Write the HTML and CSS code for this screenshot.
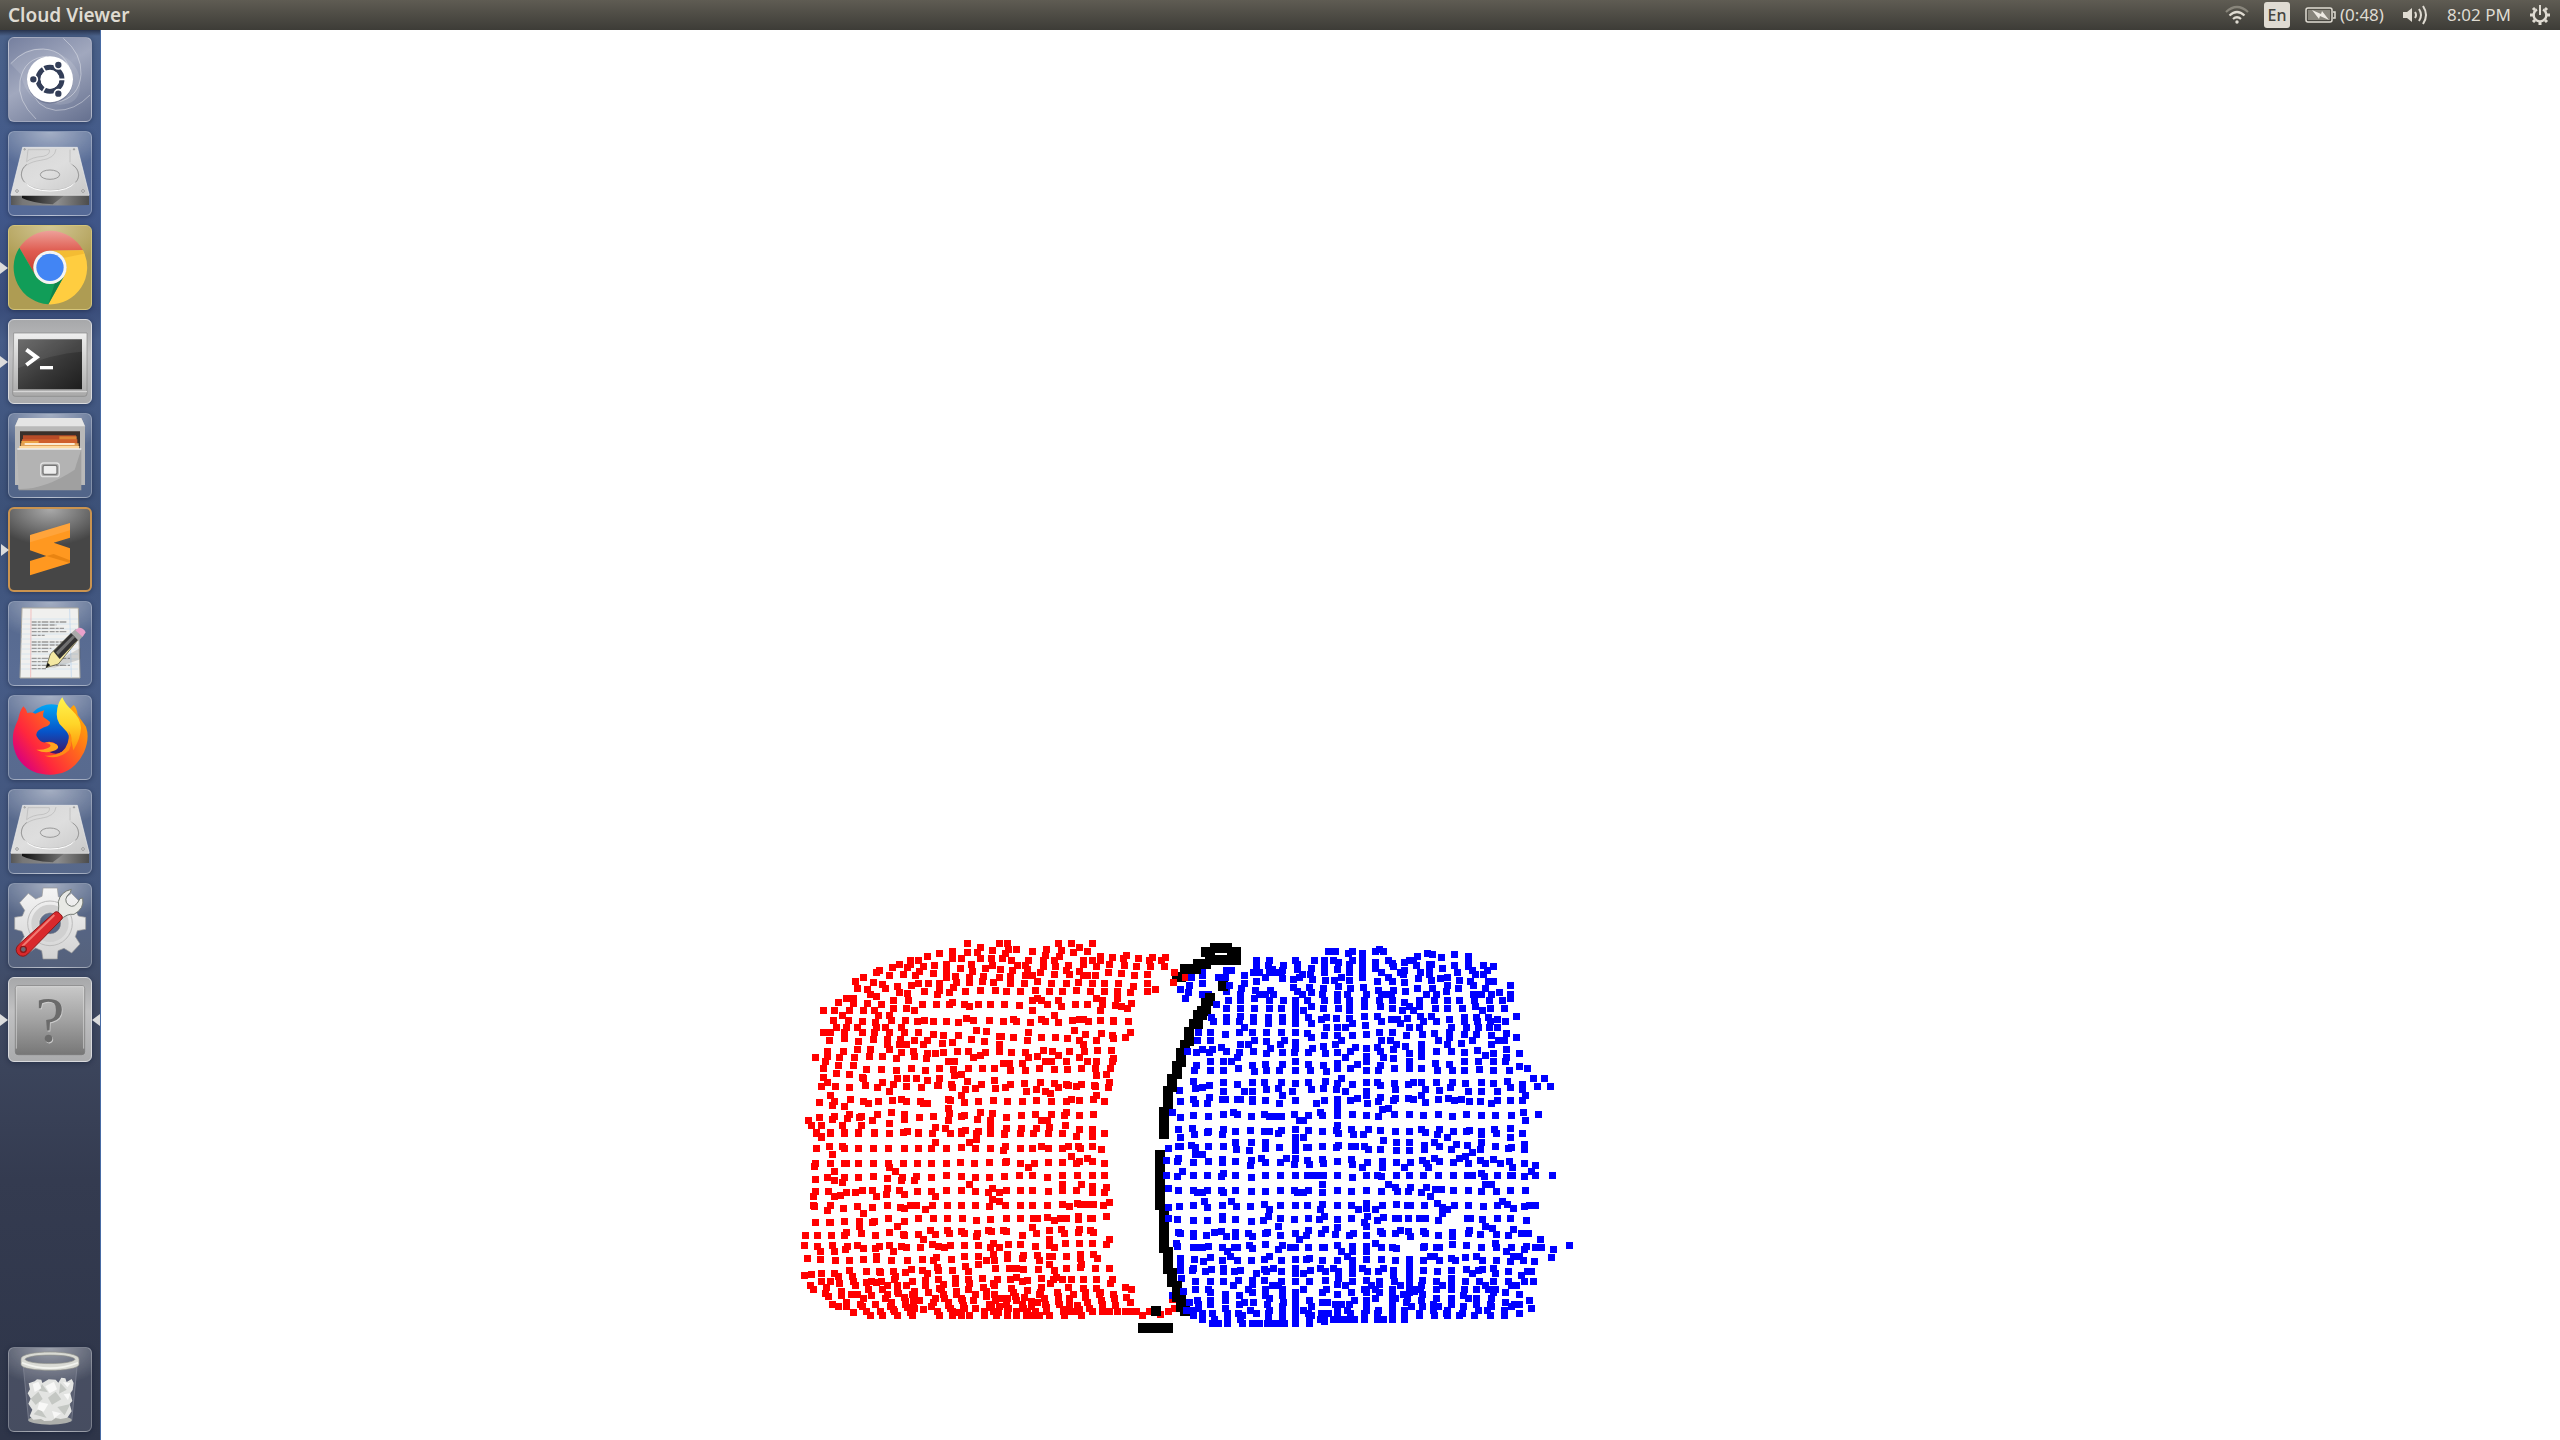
FILE: index.html
```html
<!DOCTYPE html>
<html lang="en">
<head>
<meta charset="utf-8">
<title>Cloud Viewer</title>
<link rel="stylesheet" href="styles.css">
</head>
<body>
<header class="panel">
  <h1 class="panel-title">Cloud Viewer</h1>
  <div class="indicators">
    <button class="indicator wifi" aria-label="Network"><svg width="24" height="20" viewBox="0 0 24 20" fill="none" stroke="#dfdbd2" stroke-width="2.2"><path d="M1 7Q12-3 23 7" stroke="#88857b"/><path d="M4.500 10.500Q12 3.500 19.500 10.500"/><path d="M8 14Q12 10.500 16 14"/><circle cx="12" cy="17" r="1.700" fill="#dfdbd2" stroke="none"/></svg></button>
    <button class="indicator lang">En</button>
    <button class="indicator battery"><svg width="31" height="18" viewBox="0 0 31 18"><rect x="1" y="2" width="26" height="14" rx="2" fill="none" stroke="#dfdbd2" stroke-width="1.500"/><rect x="3" y="4" width="22" height="10" fill="#88857b"/><path d="M28 6h2v6h-2" fill="none" stroke="#dfdbd2" stroke-width="1.500"/><path d="M7 4l9 4 1-3 7 9-9-4-1 3z" fill="#eeeae2"/></svg><span>(0:48)</span></button>
    <button class="indicator volume" aria-label="Sound"><svg width="26" height="22" viewBox="0 0 26 22"><path d="M1 8h4l5-4v14l-5-4H1z" fill="#dfdbd2"/><path d="M13 8q2 3 0 6M17 5q4 6 0 12M21 2q6 9 0 18" fill="none" stroke="#dfdbd2" stroke-width="2"/></svg></button>
    <button class="indicator clock">8:02 PM</button>
    <button class="indicator session" aria-label="Session"><svg width="20" height="20" viewBox="-10 -10 20 20" fill="none" stroke="#dfdbd2"><path d="M-3-5.500A6.300 6.300 0 1 0 3-5.500" stroke-width="2.400"/><path d="M0-10V0" stroke-width="2"/><path d="M0 7V10M7 0H10M-7 0H-10M5 5L7 7M-5 5L-7 7M5-5L7-7M-5-5L-7-7" stroke-width="3"/></svg></button>
  </div>
</header>
<div class="desktop">
<nav class="launcher" aria-label="Launcher">
  <button class="tile dash" aria-label="Dash"><svg viewBox="0 0 252 255">
    <path d="M8 80Q64 12 143 45T216 150 110 196Q54 186 38 112Z" fill="#fff" opacity=".12"/>
    <g fill="none" stroke="#fff" stroke-opacity=".38" stroke-width="3"><path d="M8 80Q50 34 106 36Q178 40 190 118"/><path d="M166 4Q222 50 219 112Q214 182 146 196"/><path d="M246 174Q200 222 143 220Q80 212 70 150"/><path d="M84 246Q26 190 36 132Q48 62 118 58"/></g>
    <circle cx="126" cy="131" r="69" fill="#20294a" opacity=".25"/><circle cx="126" cy="127" r="69" fill="#fff"/>
    <circle cx="126" cy="127" r="36" fill="none" stroke="#333e58" stroke-width="15"/>
    <path d="M126 127h50M126 127l-25-43M126 127l-25 43" stroke="#fff" stroke-width="5"/><circle cx="126" cy="127" r="28" fill="#fff"/>
    <g fill="#333e58" stroke="#fff" stroke-width="5"><circle cx="76" cy="127" r="12"/><circle cx="151" cy="84" r="12"/><circle cx="151" cy="170" r="12"/></g></svg></button>
  <button class="tile" aria-label="Volume"><svg viewBox="0 0 252 255">
    <defs>
      <linearGradient id="disk" x2="1" y2="1"><stop stop-color="#d5d5d5"/><stop offset=".5" stop-color="#dedede"/><stop offset="1" stop-color="#c8c8c8"/></linearGradient>
      <linearGradient id="side"><stop stop-color="#555"/><stop offset=".15" stop-color="#777"/><stop offset=".6" stop-color="#8d8d8d"/><stop offset="1" stop-color="#4c4c4c"/></linearGradient>
      <linearGradient id="hollow"><stop stop-color="#111"/><stop offset="1" stop-color="#777"/></linearGradient>
    </defs>
    <g id="drive"><path d="M9 192H243V222Q126 225 9 222Z" fill="url(#side)"/><path d="M42 193H170L134 220Q70 216 42 201Z" fill="url(#hollow)"/><path d="M44 49H208L243 190V193H9V190Z" fill="url(#disk)" stroke="#eee" stroke-width="2"/>
    <g fill="none" stroke="#b6b6b6" stroke-width="2"><path d="M188 98Q212 110 212 132C212 158 174 178 126 178S40 158 40 132C40 106 66 92 98 88Q142 82 144 54M56 92L60 56H124Q128 70 106 76Q72 78 56 92M186 56V94"/></g><path d="M56 100Q40 112 40 132Q42 150 58 160M194 160Q212 150 212 132Q210 112 194 102" fill="none" stroke="#9b9b9b" stroke-width="3"/><ellipse cx="126" cy="131" rx="29" ry="14" fill="none" stroke="#999" stroke-width="3"/>
    <path d="M50 154Q72 180 126 180T202 154" fill="none" stroke="#fff" stroke-width="3"/>
    <g fill="#eee" stroke="#777" stroke-width="2"><circle cx="27" cy="180" r="4"/><circle cx="225" cy="180" r="4"/><circle cx="50" cy="55" r="2"/><circle cx="198" cy="55" r="2"/></g></g></svg></button>
  <button class="tile chrome running" aria-label="Google Chrome"><svg viewBox="0 0 252 255">
    <defs><linearGradient id="cred" x2="0" y2="1"><stop stop-color="#eda099"/><stop offset=".45" stop-color="#df5c50"/><stop offset="1" stop-color="#c43a2d"/></linearGradient></defs>
    <path d="M34 68A111 111 0 0 1 225 76L126 77A50 50 0 0 0 83 152Z" fill="url(#cred)"/><path d="M225 76A111 111 0 0 1 121 238L169 152A50 50 0 0 0 126 77Z" fill="#ffcd40"/><path d="M121 238A111 111 0 0 1 34 68L83 152A50 50 0 0 0 169 152Z" fill="#119d58"/><path d="M131 77H225L228 86 170 98Z" fill="#edb02b" opacity=".6"/><path d="M121 238L166 156 140 176Z" fill="#0b6b3b" opacity=".5"/><circle cx="126" cy="127" r="50" fill="#f4f4f4"/><circle cx="126" cy="127" r="41" fill="#4285f4"/></svg></button>
  <button class="tile light running" aria-label="Terminal"><svg viewBox="0 0 252 255">
    <defs><linearGradient id="term" x2="1" y2="1"><stop stop-color="#626262"/><stop offset=".55" stop-color="#383838"/><stop offset="1" stop-color="#1d1d1d"/></linearGradient><linearGradient id="metal" x2="0" y2="1"><stop stop-color="#efefef"/><stop offset="1" stop-color="#a9a9a9"/></linearGradient></defs>
    <path d="M17 42H237V224Q237 232 229 232H22Q14 232 14 224Z" fill="url(#metal)" stroke="#858585" stroke-width="2"/><path d="M16 218H237" stroke="#ddd" stroke-width="3"/><path d="M30 61H222V211H30Z" fill="url(#term)"/><path d="M30 61H222V98Q130 104 30 148Z" fill="#fff" opacity=".07"/><path d="M55 92L86 115 55 138" fill="none" stroke="#fff" stroke-width="12"/><path d="M96 146H135" stroke="#fff" stroke-width="10"/></svg></button>
  <button class="tile" aria-label="Files"><svg viewBox="0 0 252 255">
    <path d="M32 15H220L231 40V216H21V40Z" fill="#b9b9b9"/><path d="M32 15H220L231 40H21Z" fill="#e5e5e5"/><path d="M36 55H216V112H36Z" fill="#3b302a"/><path d="M45 67H204V110H45Z" fill="#b84c28"/><path d="M154 70H206V110H154Z" fill="#dc8738"/><path d="M42 79H208V110H42Z" fill="#cf5f2c"/><path d="M40 84H92V110H40Z" fill="#eca347"/><path d="M38 91H212V112H38Z" fill="#e1a257"/><path d="M50 90H200V96H50Z" fill="#fbe9d1"/><path d="M34 99H214V108H34Z" fill="#ffd9a0"/><path d="M28 108H220V232H32Z" fill="#a0a0a0"/><path d="M28 108H220L200 170Q110 230 30 228Z" fill="#c0c0c0" opacity=".6"/><path d="M28 108H220" stroke="#eee" stroke-width="4"/><rect x="98" y="150" width="56" height="41" rx="9" fill="#aaa" stroke="#e2e2e2" stroke-width="4"/><rect x="105" y="157" width="42" height="27" rx="5" fill="#eee" stroke="#777" stroke-width="4"/></svg></button>
  <button class="tile sublime running" aria-label="Sublime Text"><svg viewBox="0 0 252 255"><path d="M66 84L186 48V92L137 107 186 124V168L66 205V162L115 147 66 130Z" fill="#ff9820"/><path d="M115 147L186 168V160L137 141Z" fill="#cf6d00" opacity=".45"/><path d="M66 84L186 48V70L66 106Z" fill="#fff" opacity=".12"/></svg></button>
  <button class="tile" aria-label="Text Editor"><svg viewBox="0 0 252 255">
    <path d="M42 21H211L216 231H36Z" fill="#f0f0ee" stroke="#aaa89f" stroke-width="3"/><g stroke="#cbdff0" stroke-width="2"><path d="M42 54H210M42 69H210M41 84H210M41 99H210M40 114H210M40 129H210M40 144H210M40 159H210M40 174H210M40 189H210M39 204H210"/></g><path d="M69 24L68 230" stroke="#f1a7a7" stroke-width="2"/><path d="M185 24L190 230" stroke="#b9d3ee" stroke-width="2"/>
    <g stroke="#999" stroke-width="4" stroke-dasharray="15 3 9 3 20 4"><path d="M71 63H176M71 72H145M71 82H168M71 92H178M71 103H110M71 123H176M71 132H165M71 142H130M71 152H120M71 172H186M71 182H140M71 193H186M71 203H114"/></g>
    <path d="M114 199L218 140V175L140 200Z" fill="#555" opacity=".2"/><path d="M127 159L189 98 209 118 151 189 114 200Z" fill="#f4e8a2" stroke="#3b3927" stroke-width="2"/><path d="M136 151L190 96 210 116 155 174Z" fill="#333"/><path d="M144 154L195 103 201 109 150 162Z" fill="#707070"/><path d="M190 96L204 83 226 104 212 119Z" fill="#aaa"/><path d="M202 88L212 80Q228 80 233 94L224 107Z" fill="#e9a1cb"/><path d="M114 200L119 185 127 193Z" fill="#111"/></svg></button>
  <button class="tile" aria-label="Firefox"><svg viewBox="0 0 252 255">
    <defs><linearGradient id="fox" x1="0" y1=".7" x2="1" y2="0"><stop stop-color="#d8007f"/><stop offset=".25" stop-color="#ff273d"/><stop offset=".6" stop-color="#ff6a1c"/><stop offset="1" stop-color="#ffbd00"/></linearGradient><linearGradient id="globe" x2="0" y2="1"><stop stop-color="#00a5f5"/><stop offset=".55" stop-color="#0753c8"/><stop offset="1" stop-color="#3e1465"/></linearGradient><linearGradient id="tail" x2="0" y2="1"><stop stop-color="#fff44f"/><stop offset=".5" stop-color="#ffd529"/><stop offset="1" stop-color="#ff9208"/></linearGradient></defs>
    <circle cx="130" cy="103" r="75" fill="url(#globe)"/><path d="M46 34Q54 40 58 54Q70 50 82 56Q95 50 109 46Q104 56 106 66L124 79Q130 86 119 93Q107 95 92 106Q80 116 88 127Q97 144 112 142Q133 137 147 149Q139 162 118 167Q142 184 162 170Q192 153 184 112L174 64Q184 40 197 30Q207 40 209 60L234 95Q246 130 228 172Q195 239 126 239Q63 239 30 190Q8 150 17 108Q22 90 30 74Q36 46 46 34Z" fill="url(#fox)"/><path d="M163 7Q170 26 192 46Q218 70 219 99Q218 130 196 166Q190 120 164 97Q140 77 148 40Q152 19 163 7Z" fill="url(#tail)"/><path d="M182 108Q200 130 183 166Q151 197 110 182Q142 183 162 170Q186 150 182 108Z" fill="#ff8a16"/><path d="M85 164Q112 178 142 166Q156 158 147 149Q132 138 112 143Q140 149 118 160Q102 166 85 164Z" fill="#ffa51f"/></svg></button>
  <button class="tile" aria-label="Second Volume"><svg viewBox="0 0 252 255"><use href="#drive"/></svg></button>
  <button class="tile" aria-label="System Settings"><svg viewBox="0 0 252 255">
    <defs><linearGradient id="gear" x2="0" y2="1"><stop stop-color="#f5f5f5"/><stop offset="1" stop-color="#d2d2d2"/></linearGradient></defs>
    <path fill-rule="evenodd" d="M105 15H148L151 41 168 48 190 31 219 60 203 83 211 99 233 103V139L208 143 202 161 216 183 191 210 168 196 150 203 148 228H105L101 203 83 195 60 211 34 184 49 161 42 145 20 139V103L43 99 50 82 35 59 61 31 83 48 102 40ZM126 89a32 32 0 1 0 1 0Z" fill="url(#gear)" stroke="#999" stroke-width="2"/><circle cx="126" cy="121" r="67" fill="none" stroke="#bbb" stroke-width="3"/><circle cx="126" cy="121" r="45" fill="none" stroke="#d0d0d0" stroke-width="22"/>
    <path d="M145 99Q155 84 151 56Q158 26 190 19L187 28Q163 50 181 66Q200 80 216 47L224 45Q230 77 198 94Q176 91 158 111Z" fill="#e8e9e5" stroke="#777c76" stroke-width="3"/><path d="M140 88Q148 81 162 99Q166 105 158 112L59 213Q46 226 30 214Q18 199 32 185Z" fill="#d9292c" stroke="#8d1717" stroke-width="3"/><path d="M139 96L43 190" stroke="#f27a72" stroke-width="6"/><circle cx="46" cy="199" r="9" fill="#6b6873" stroke="#8d1717" stroke-width="4"/></svg></button>
  <button class="tile light running focused" aria-label="Cloud Viewer"><svg viewBox="0 0 252 255">
    <defs><linearGradient id="unknown" x2="0" y2="1"><stop stop-color="#c9c9c9"/><stop offset=".5" stop-color="#a2a2a2"/><stop offset="1" stop-color="#777"/></linearGradient></defs>
    <rect x="22" y="26" width="208" height="207" rx="8" fill="url(#unknown)" stroke="#777" stroke-width="2"/><path d="M25 215V29H227V215" fill="none" stroke="#ddd" stroke-width="2"/><text x="128" y="198" text-anchor="middle" class="question question-light">?</text><text x="126" y="196" text-anchor="middle" class="question">?</text></svg></button>
  <button class="tile trash" aria-label="Trash"><svg viewBox="0 0 252 255">
    <path d="M45 50L62 222Q126 238 191 222L208 50Z" fill="#b8bac2" fill-opacity=".17" stroke="#858a99" stroke-width="2"/><ellipse cx="126" cy="219" rx="65" ry="14" fill="#aeb0ac"/>
    <path d="M62 109L80 103 87 97 100 98 103 108 122 97 143 98 151 107 160 92 172 94 176 105 191 96 197 108 194 129 187 139 193 162 185 171 191 193 178 212 158 216 143 213 131 221 109 222 99 216 76 218 65 207 73 188 61 170 68 155 59 139 66 127Z" fill="#e3e4e2"/>
    <g fill="#c4c7c3"><path d="M68 155L91 134 104 156 83 174ZM102 111L120 136 93 131ZM120 152L143 134 160 157 132 173ZM157 108L176 128 153 140ZM148 180L187 171 170 205ZM77 202L95 183 116 213Z"/></g><g fill="#f8f8f7"><path d="M74 111L91 104 100 124 80 135ZM112 118L138 104 147 127 125 139ZM167 142L187 139 180 160ZM94 165L121 171 107 194 88 187ZM132 192L159 199 139 214ZM165 105L187 109 178 121Z"/></g>
    <path fill-rule="evenodd" d="M39 36C39 8 213 8 213 36V52C213 76 39 76 39 52ZM51 37C58 54 194 54 201 37C194 20 58 20 51 37Z" fill="#d9dad4" stroke="#91928c" stroke-width="2"/><path d="M42 47Q126 80 210 47" stroke="#f3f4ef" stroke-width="5" fill="none"/></svg></button>
</nav>
<main class="viewer">
  <svg id="cloud" class="cloud" viewBox="101 30 2459 1410" role="img" aria-label="Point cloud"></svg>
</main>
</div>
<script src="cloud.js"></script>
</body>
</html>
```

FILE: styles.css
```css
* { box-sizing: border-box; }
body { margin: 0; min-height: 100vh; display: flex; flex-direction: column; background: #fff; font-family: "Noto Sans", sans-serif; overflow: hidden; }
button { border: 0; padding: 0; background: none; color: inherit; font: inherit; }
svg { display: block; }
.panel { height: 30px; flex: none; display: flex; align-items: center; justify-content: space-between; padding: 0 10px 0 8px; background: linear-gradient(#5f5c53, #3d3c37); color: #dfdbd2; }
.panel-title { margin: 0; font-size: 19px; line-height: 30px; font-weight: 600; }
.indicators { display: flex; align-items: center; font-size: 17px; }
.indicator { display: flex; align-items: center; line-height: 30px; white-space: nowrap; }
.wifi { margin-right: 15px; }
.lang { width: 26px; height: 26px; margin-right: 15px; justify-content: center; border-radius: 3px; background: #dfdbd2; color: #45443e; font-size: 16px; font-weight: 500; }
.battery { gap: 4px; width: 82px; margin-right: 15px; }
.volume { margin-right: 19px; }
.clock { width: 66px; margin-right: 17px; }
.desktop { flex: 1; display: flex; }
.launcher { width: 101px; flex: none; display: flex; flex-direction: column; gap: 9px; padding: 7px 8px 8px; border-right: 1px solid #476ba4; background: linear-gradient(#28334c, #4a6189 6px, #40578a 180px, #3a4d7a 280px, #465c88 310px, #3c5178 480px, #465b86 640px, #42557b 860px, #3f4961 980px, #343b50 1150px, #2e3549 1410px); }
.tile { position: relative; width: 84px; height: 85px; flex: none; border: 1px solid rgba(255,255,255,.28); border-radius: 6px; background: radial-gradient(ellipse 75% 45% at 50% 0, rgba(255,255,255,.5), rgba(255,255,255,.08) 100%), rgba(150,160,190,.08); box-shadow: 0 1px 5px rgba(10,20,45,.45); }
.tile svg { width: 84px; height: 85px; margin: -1px; }
.dash { background: linear-gradient(150deg, #76809f, #a1a8be 45%, #65708f); }
.chrome { background: radial-gradient(ellipse 75% 45% at 50% 0, #d3c794, #ae9c53); border-color: #d4c479; }
.light { background: linear-gradient(#a7a8aa, #c1c1c2 40%, #aaabad); border: 1px solid #d9dadd; }
.sublime { background: radial-gradient(ellipse 75% 45% at 50% 0, #aaa, #464646); border: 2px solid #ca934f; }
.sublime svg { margin: -2px; }
.trash { margin-top: auto; }
.running::before, .focused::after { content: ""; position: absolute; top: 50%; margin-top: -6px; border: 6px solid transparent; }
.running::before { left: -9px; border-left: 8px solid #dcdcdc; border-right: 0; }
.focused::after { right: -9px; border-right: 8px solid #dcdcdc; border-left: 0; }
.question { font: 196px "Liberation Serif", serif; fill: #6b6b6b; }
.question-light { fill: #ccc; }
.viewer { flex: 1; min-width: 0; background: #fff; }
.cloud { width: 100%; height: 100%; shape-rendering: crispEdges; }
```

FILE: cloud.js
```js
// Each scan line is "y:x x x", in thirds of a pixel from the patch origin.
const patches = [
{ color: "#f00", x: 780, y: 920, rows: `70:562 658 682|82:601|91:637|94:517|97:562 592|100:478 676|109:442|115:517 544 601 634 667|121:391 415|133:358 391 499 574|136:463 637|139:430|142:337 382|145:541 616|148:661|151:298 499|154:418 577|157:289|160:460|163:370|166:328 406|169:526 610|172:250 499 568 658|184:226 607|187:280 529 568 640|190:415 445 478|193:307|196:394|199:352|202:520|205:232 316|208:262|211:601 646 478|214:433 556 679|217:358 508|220:382|223:271 472|229:289|235:199 220|241:340 385|247:175 517|250:220 262|253:304 427 469 508 553 595 631 673|259:568|265:340 379|271:130 163 208 250 283 403|286:187 295 328|295:559|301:160 205 334 376 433 580 628|304:247 412 460 499 670|307:286 535|322:169 199 232 289 316 364|331:589|334:619|337:130 151 193 247 283 328 373 415|343:460|346:490 535|349:658 661|355:193|358:280 322 361 574|361:148 403 442|364:235 613|367:517|370:487|373:322 358 379 430 658|388:232 271 328|394:142 190 400 532 565 658|397:364 490 616|400:442 466|406:601|409:268 307 403 142|412:106 178 223 580|415:349 439|424:136 505 523|430:670|436:175 220|445:130 394 478 565 607 643|448:259 304 520|451:349 436|460:169|463:208 544|466:523|472:130 247|475:352 379 409 478 250|481:442 643|484:562|487:142 307|493:340 514 604|496:256 472 475|499:124 166 379|502:208 292 424 517 676|505:586 646|508:556|514:328|526:151 544|538:211 364 505|541:337 640 511|544:163 250 295 379 421 595 682|547:118 553|550:265 430 442|556:157|559:193|565:505|577:334 601|580:508 637|583:208 292 373|586:553|589:163 244 460 544|592:118 238 418 679|595:202|598:157 592 373|601:85 277 505 631|610:328|616:94 124 187 244 631|622:466|625:496 679|631:556|634:382 544 595|637:109 151 193 235 283 370 415 631|640:328 457 511|643:673 589|649:124` },
{ color: "#f00", x: 1000, y: 920, rows: `70:22 175 214 277|82:238|88:25 49 139|91:184|94:97 262|97:220|106:379 136|109:301 178|112:337 457 496|115:370 415|121:34 85 130 163 250 277 301 448 484|133:250 328|136:52 76 373 205|139:130 166 289 409 451 493|148:82|151:37 199|154:238|157:121 325 523|160:364|163:163 208 442|166:76 97 250 262 286 403|169:31|184:112|187:235 520|190:31 73 154 199 277 313 355 442|199:400|208:466|211:106 229|214:19 61 148 187 271 313 352 442|217:391|235:112 289 352|241:97 124 175 307|250:394|253:13 142 226 262 307|256:58 346|259:184 364|265:382|271:97 301|286:163|298:40 124 238 250|301:217 301 340|304:10 49 136 265 385 340|307:91 175|331:223|337:85 391|340:304|343:256|346:337|349:4|352:40 124 166 376|355:202 340|361:82 238 289|373:250|391:130 292 334|394:157 208 253|397:34 76|406:175|409:112|412:85 238|415:340|424:136 154 199 262 289 337|430:10 28 67|445:118 244 286 331|448:163 202|451:31 76|463:319|466:289|487:121 328|490:73 163|493:31 199 244|496:205 283|499:229 286|502:16 175 325|508:109|514:79 136|520:151|526:289|538:214 280|541:109 238|544:22 67 154 199 313|577:199|583:106 154 280|586:64 193 238|592:19|601:124 142|616:196|622:148|625:19 64 109|628:238 277|640:13 61 100 145 187 313|646:277|649:229` },
{ color: "#f00", x: 780, y: 1130, rows: `10:109 151 193 235 283 328 415 457 511 544 589 631 673 721 760 805 847 937 973|19:889 937|22:124|28:589|37:466 568|49:148 187 676 784 865 895 937|52:544|55:109 193 235 280 325 373 415 454 499 586 631 721 757 805 847 901|58:964|61:670|73:157|79:874|85:922|94:679 898 937|97:541 628 847 805 676|100:106 151 193 199 235 280 325 370 412 454 499 583 721 763 889 973|109:103|112:328 745|124:163 346|136:499 718 757 847 892 937 973|139:280 409 544 673|142:142 193 235 367 454 586 628 802|145:322|148:106|151:163 364 403|157:187|163:568 847 904|169:937|172:979|175:322 637|181:247 277 358 499 544 721 757 679 889 847|184:106 145 412 454 586 805|187:199 226 625 658 973 937|193:319 373|196:181|199:100 163 289 466|208:637|214:658|217:988|220:892|223:847 901 919 940|226:100 151 322 391 409 457 502 544 586 676 721 757 802 970|229:103 232 868 628|232:277 361|235:190 373|238:436|241:142|250:250|259:979 895|262:802|265:325 415 460 502 547 679 721 760 772 841 859 895 931 937|268:631 895|271:589 823|274:193 238 283 373|277:106 148 151 277|289:238 352|292:757|298:844 898|301:451 502 625 670 808 931|304:544 634 679|307:199 328 895 940|310:244 553 508 769 592 853|313:370 415 466|316:76 112 154 193 286 373 727|319:589|328:430 808 988|340:640 856 898 937|343:685 721 457 979|346:73 157 232 328 511 553 595 808|349:112 202 298 364 475 766|352:379 421 493 631 658 823|355:250 286|358:196|364:121 163 340|373:640 682 901 940|376:730 772|379:289 553 595 808 859 817|382:469|385:82 682 901 952 727|388:121 250 427 514 289|391:166 208 334 382 460 619 643 778|403:595 808 904|409:556|412:472 901|415:646 688 709 859 946 988|418:394 730 775|421:208 427 475 517 823|424:259 298 340 565|427:376 301|430:124 163 442|433:94|436:73|439:175 217 346|442:709 829|445:607 784 526|448:343 475 565 652 691 820 847 874 910 949 997|451:436 742|454:124 151 220 274 304 397 727|457:259 289|460:178 526 640 811 991 568|463:490|466:91 226 322 352 379 436 643|472:139 610 784 865 1036|475:478 694 949 910|478:100 265 307 484 565 1054|481:742|484:184 403 352 529 619|487:445 700 916 961 781 832|490:136 355|493:214 232 322 397 490 529 586 643 778 880 958 1000|496:184 274|499:145 706 619 835|502:373 403 733 916 1039|505:250 316 466 493 544 664 682 793 868 1003|511:580 418 547 646 709 964|514:376 400 754 835|517:199 334 460 505 772 922 1051|523:157 241 286 376 628 679 727 796 838 868 967|526:550 892 1006 505|529:175 199 247 331 454 658 754|532:382 634 799|535:586 403 511 553 685 730 928|538:430 340 850 898|544:259 301 343 472 517 613 640 682 709 742 766 799 850 871 889 937 967 988 1012 1036 1057 1069 1108|547:220 391 535 655|553:1141|556:271 307 352 397 478 517 544 568 613 649 682 709 739 760 778 808 853 904 1087|544:1165|535:1183|508:1177` },
{ color: "#00f", x: 1130, y: 920, rows: `88:748|94:595 616 667 736 760|100:655 697 892|103:907 973|109:862 1015|112:934|121:379 418 496 553 583 610 667 697 775 838 850 1015|127:625 736 823|130:787|133:379 502 583 658 898 904|136:460 415 859 973 1060 697|139:1090 790 1015 379|145:544 583 697 736 658 937|148:622 427 502 898|151:217 289 304 457 823 1027 1072|157:370 388 418 436 454 583 697 754 811 871 982 658|163:517 541 1036 1060 820 898|166:343 217|172:184 265 286 406 508 634 697 775 952|175:457 865 931|178:490 547|181:586 613 658 904 988|184:379 742 787 1021 1075 1090|187:823|190:217 343|196:178 298 952 1030 1141|199:625|202:490 538 700|205:334 580 661 907 862 985 1066|208:151|211:376 421 745 790|214:289 826 502 949|217:175 544 1108|223:217 234 331 388 406 430 517 577 622 652 709 754 772 784 889 919 1045 1030 1054 1084 1141|235:166 373 1141|241:295 331 418 460 496 532 583 622 658 703 748 787 868 913 952 988 1033 1078 1117|247:823|253:259 868 703 658|259:496 544 703 751 838 868 1036|265:289 331 373 418 454 580 625 787 916 952 997 1081 1123|271:520 817 850 1057 658 496|289:331 496 703 742 904 871 1159|292:244 289 370 415 457 535 589 1003 1039 1075|295:619 658 832|298:784 802 958 1102 574|304:250 289 328 370 457 496 754 880 919 1003 1042 1081 1126|310:415 544 667 811 496|316:706|322:343 589 622 646 838 868 964 1009 1045 1078 1102|337:205 241 328 367 409 454 496 748 787 958|340:913 532 1129|343:286 709 877 1003 1039|346:583 622 667 829 1084|352:544 1159 958|361:202 241 373 463 634 754 781 925 1027 1105 1123|364:409|367:496|370:994|373:331 355 451 616 799 874 952 1084|379:580 826|382:274 676 742|385:421 547 496 709|388:217 247 1129 790|391:1042|394:172 289 370 661 751 874 919 964|397:199 238 328 457 493 535 622 1003|400:409 586 838 1090 1168|406:1066|409:709 874|412:322 646 760 1129|415:790|424:241 280 304 496 709 838 1003 1045 1090 1126|430:916 622|433:406 457 535 682 958|436:199 367 580 751|439:1168|445:325 661 793 838 874 1192 622|448:1048|451:193 241 280 409 448 496 541 745 709 922 967 1003 1090 1138|454:373 589|475:634 1210 1243|484:190 586 1132|487:280 367 403 454 535 709 742 850 874 919 967 1054|490:496 622 793 1006 1090|493:322 667 835 1177|496:238 751|499:1222 1261|502:217 961 1141|505:196 445 580|508:409 544 619 796 886 1177|511:148 928|514:280 343 367 487 646 709 1015 1054 1102|526:457 709 874 1186|532:238 751|535:682 796 835 955|538:190 277 286 322 331 367 622 850 925 994|541:406 496 583 661 790 973 1102 1141 1177|544:151 367 745 1018 1051|547:886|550:196 232 448 559 712 1084|556:622|565:775|568:757|577:127 310 571 1180 622|583:280 322 403 493 667 793 838 925 1009 1225|586:190 535 577 709 880 1054 1096 1144 622|589:235 364 418 436 454 745 967|592:151|601:508 520 1186|616:622|625:187 1141|628:145 280 496 664 715 874 928 1093|631:361 454 535 619 751 1018|634:235 316 403 418 577 796 838 970 1009 1054|637:232|637:886|640:445 625 1099 1177|643:193 277 700 670 922 1054|652:151 496 520 952 1141|661:760|667:316 364 406 799 838 913 1054|673:496 979 1183|676:184 625 883 1012|679:145 151 280 235 577 664 676 703 928 1096|682:196 448 529 535 619 1144|685:115 1135 406|688:319 715 751 883 964 1051 1183|691:358 496 799 838|697:1027|703:196 217|709:1006|715:145 394 469 496 913 988|718:277 577 664 1090|721:109 364 532 877 1051|724:142 235 316 622 757 928 1138|727:190 277 406 451 712 799 841 970|730:580 889 1015 1066 1111 1183|733:493 538 667|736:361 1216|742:697 823 895 1147 757|754:157 1204|760:280 1054|766:109 190 232 316 406 451 496 532 550 565 580 622 709 742 799 838 880 925 970 1012 1027 1102 1141 1147 1216 1267|769:142 274 754 1063 1183|772:364 667|793:577 775 1066 1084|802:796 841 889|805:115|808:916 934|811:145 190 232 274 316 451 493 535 622 709 970 1015 1141 1186|814:364 406 664 754 802 835 1054 1099|817:202 217 280 502 520 577 874|829:901|844:223 304 1117|850:709 922|853:403 577 799 1132|856:190 277 451 496 532 622 664 757 832 841 883 973 1015 1102 1198 1216|859:148 319 361 1060 1183|862:115 232 937|865:709 1150|868:418 571 685 736 952|880:937|889:277 415 583 712|892:760|895:115 451 535 664 796 805 835 868 886 1012 1021 1102 1141|898:142 316 493 568 622 277 1057|901:190 232 400 742 925 1189|904:364|907:703|919:445 709 1066|922:622|925:1087|928:586 1150|931:535 811 1018|934:274 751 835 880|937:145 253 412 316 967|940:151 190 355 406 496 574 670 757 796 886 1015 1174 1195|943:616 1051 1099|946:229 451 529 658 709 925 1135|949:289 367 316 841 967 190|958:508 1231|970:139 736 1096|973:406 967|976:358 457 622 1009 1318|979:142 235 709 883 667 1189|982:190 217 202 277 313 322 481 496 535 577 583 754 787 880 919 928 1054 1099 1144 1216 1234|985:367 799|988:445 667 709 1183 1270|994:292 634 667 709 1129|1009:301 418 652 901 913 1039 1150 1168|1012:241 1006 1264|1015:151 538 964|1018:193 403 496 529 709 754 838|1021:277 322 364 454 577 622 667 796 880 928 976 1057 1099 1180|1024:220 1141 1213|1033:151 838 667|1045:190 280 430 496 571 610 697 760 1090|1048:244 403 1009 1057|1051:187 331 541 151 790 880 964 1045 838|1054:226 280 313 409 454 586 625 667 712 745 922 1135 1192 1204|1060:379 496 520 667 1027 1096|1066:1174 790 838|1075:154 625 964|1081:325 367 403 586 709 877 838|1084:196 241 280 454 496 538 667 748 793 919 1006 1048 1090 1135 1183 1210|1093:622 367 748 964|1096:310 427 445 646 724 811 838 874 937 1066 1144 1159|1108:196 235 355 406 457 520 589 703 736 787 853 871 919 964 1003 1039 1075 1096|1114:160 853|1117:241 367 496 577 664 709 748 838 1090 1126|1123:286 622 787 820 877 1168|1126:328 406 457 1000|1135:418 496 736 796 832 919 964 1015 1039 1084|1141:202 241 286 538 673 709 787 874 1198|1147:175 343 370 460 577 592 829 1126|1153:205 241 328 412 496 616 634 658 709 787 910 964 1039 1081 1153 1168|1159:457 544 844 877 925 1000 1084 1144|1165:205 1204 286|1171:169 184 361 418 457 496 520 622 652 709 745 787 823 910 952 1045 1072 1123|1180:217 247 292 325 379 415 535 574 595 622 661 703 742 868 949 997 1168|1186:190 337 457 496 544 787 823 868 913 952 988 1033 1081 1123|1198:217 253 292 331 415 457 496 538 571 583 610 625 643 661 673 703 742 760 787 823|1204:583|1210:247 265 292 337 367 388 412 430 448 463 496 538|1126:127` }
];

// Separator curve as left, top, right, bottom boxes in the blue patch's units.
const curve = [[240,69,306,99],[213,81,255,111],[291,81,333,111],[225,105,333,135],[189,117,243,147],[150,132,213,162],[126,156,168,186],[264,183,294,213],[225,219,255,258],[213,234,243,288],[201,258,243,288],[189,270,231,300],[189,270,219,327],[177,297,219,327],[162,321,192,378],[150,360,180,390],[138,384,168,441],[126,423,156,477],[111,462,141,516],[99,498,129,570],[87,561,117,657],[75,690,105,870],[87,867,117,999],[99,981,129,1062],[111,1044,141,1101],[126,1083,156,1146],[138,1116,168,1176],[150,1158,180,1188],[63,1158,93,1188],[24,1209,129,1239]];

const svg = document.getElementById("cloud");
function paint(color, d) {
  const path = document.createElementNS("http://www.w3.org/2000/svg", "path");
  path.setAttribute("fill", color);
  path.setAttribute("d", d);
  svg.append(path);
}
function squares(patch) {
  let d = "";
  for (const row of patch.rows.split("|")) {
    const [y, xs] = row.split(":");
    for (const x of xs.split(" ")) {
      const left = patch.x + Math.round((x - 10) / 3);
      const top = patch.y + Math.round((y - 10) / 3);
      d += `M${left} ${top}h7v7h-7z`;
    }
  }
  paint(patch.color, d);
}
patches.forEach(squares);
paint("#000", curve.map(([l, t, r, b]) => `M${1130 + l / 3} ${920 + t / 3}h${(r - l) / 3}v${(b - t) / 3}h${(l - r) / 3}z`).join(""));
// Points that lie in front of the curve.
squares({ color: "#f00", x: 1130, y: 920, rows: "157:133|172:166|187:130" });
squares({ color: "#00f", x: 1130, y: 920, rows: "172:184|196:298|253:259|292:244|337:205|394:172|577:127|685:115|721:109|766:109|805:115|862:115|895:115|1114:160|1147:178|1171:169" });
```
